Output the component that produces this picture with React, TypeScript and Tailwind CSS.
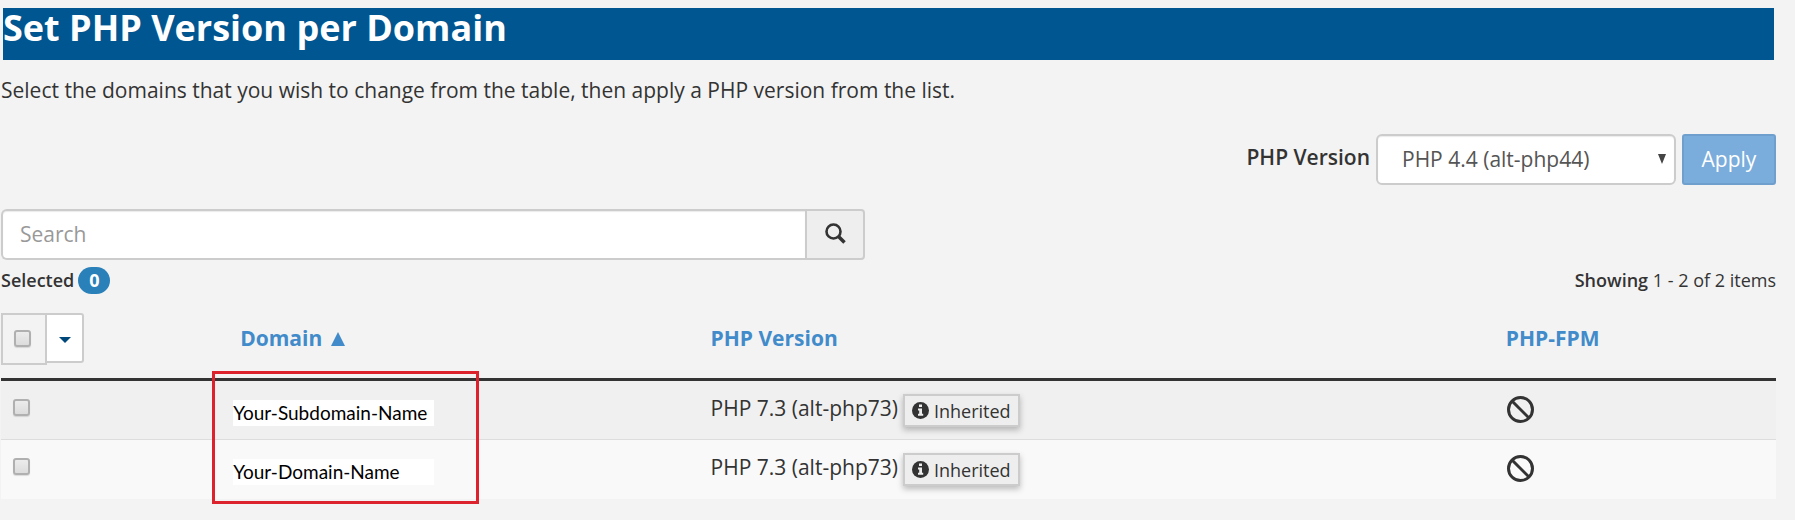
import { useState } from 'react';

const DOMAINS = [
  { name: 'Your-Subdomain-Name', version: 'PHP 7.3 (alt-php73)' },
  { name: 'Your-Domain-Name', version: 'PHP 7.3 (alt-php73)' },
];

export default function App() {
  const [selected, setSelected] = useState<string[]>([]);
  const allSelected = selected.length === DOMAINS.length;

  function toggle(name: string) {
    setSelected((prev) => (prev.includes(name) ? prev.filter((n) => n !== name) : [...prev, name]));
  }

  return (
    <main className="min-h-screen bg-[#f3f3f3] pt-2 pr-[19px] pb-4 pl-px font-['Open_Sans',sans-serif] text-[21px] leading-[30px] font-normal text-[#333]">
      <h1 className="mr-0.5 ml-0.5 h-[52px] bg-[#005691] text-[36px] leading-10 font-bold text-white">
        Set PHP Version per Domain
      </h1>
      <p className="mt-[15px]">
        Select the domains that you wish to change from the table, then apply a PHP version from the list.
      </p>

      <div className="mt-[29px] flex items-center justify-end">
        <label htmlFor="php-version" className="mr-1.5 pb-1.5 font-semibold">
          PHP Version
        </label>
        <div className="relative">
          <select
            id="php-version"
            className="h-[51px] w-[300px] appearance-none rounded-md border-2 border-[#ccc] bg-white pb-0.5 pl-6 text-[#555] shadow-[inset_0_1px_1px_rgba(0,0,0,0.08)]"
          >
            <option>PHP 4.4 (alt-php44)</option>
          </select>
          <svg viewBox="0 0 10 10" className="pointer-events-none absolute top-5 right-[9px] size-[10px] fill-[#444]">
            <path d="M1 0h8L5 10z" />
          </svg>
        </div>
        <button
          type="button"
          className="ml-1.5 h-[51px] w-[94px] rounded-[3px] border-2 border-[#6f9fcd] bg-[#7aaddc] pb-0.5 font-normal text-white"
        >
          Apply
        </button>
      </div>

      <div className="mt-6 flex h-[51px] w-[864px] max-w-full">
        <input
          type="search"
          aria-label="Search"
          placeholder="Search"
          className="min-w-0 flex-1 rounded-l-md border-2 border-r-0 border-[#ccc] bg-white px-[17px] pb-0.5 shadow-[inset_0_1px_1px_rgba(0,0,0,0.08)] placeholder:text-[#999]"
        />
        <button
          type="button"
          aria-label="Run search"
          className="flex w-[60px] items-center justify-center rounded-r-[4px] border-2 border-[#ccc] bg-[#eee] pb-0.5"
        >
          <svg viewBox="0 0 21 21" className="size-[21px] fill-none stroke-[#333]">
            <circle cx="8.5" cy="8.5" r="7" strokeWidth="2.6" />
            <path d="M13.5 13.5l6 6" strokeWidth="3.6" />
          </svg>
        </button>
      </div>

      <div className="mt-[7px] flex h-[27px] items-center justify-between text-[18px]">
        <div className="flex items-center gap-1">
          <span className="pb-0.5 font-semibold">Selected</span>
          <span className="h-[27px] w-8 rounded-full bg-[#2a80b9] text-center leading-[26px] font-bold text-white">
            {selected.length}
          </span>
        </div>
        <div className="pb-0.5">
          <span className="font-semibold">Showing</span> 1 - 2 of 2 items
        </div>
      </div>

      <div className="relative mt-[19px]">
        <table className="w-full table-fixed border-separate border-spacing-0 text-left">
          <colgroup>
            <col className="w-[12.8%]" />
            <col className="w-[26.5%]" />
            <col className="w-[44.8%]" />
            <col />
          </colgroup>
          <thead>
            <tr className="h-[68px] align-top text-[#428bca] [&>th]:border-b-3 [&>th]:border-[#333]">
              <th className="p-0">
                <div className="flex items-start">
                  <label className="flex h-[52px] w-[46px] items-center border-2 border-[#ccc] bg-[#f3f3f3] pb-0.5 pl-[11px]">
                    <Checkbox
                      label="Select all domains"
                      checked={allSelected}
                      onChange={() => setSelected(allSelected ? [] : DOMAINS.map((d) => d.name))}
                    />
                  </label>
                  <button
                    type="button"
                    aria-label="Selection options"
                    className="-ml-0.5 flex h-[50px] w-[39px] items-center justify-center rounded-r-[3px] border-2 border-[#ccc] bg-white"
                  >
                    <svg viewBox="0 0 12 6" className="mt-1 h-1.5 w-3 fill-[#00477a]">
                      <path d="M0 0h12L6 6z" />
                    </svg>
                  </button>
                </div>
              </th>
              <th className="px-3 pt-2.5 font-bold">
                <button type="button" className="flex items-center gap-[9px]">
                  Domain
                  <svg viewBox="0 0 14 14" className="mt-0.5 size-[14px] fill-[#428bca]">
                    <path d="M7 0l7 14H0z" />
                  </svg>
                </button>
              </th>
              <th className="px-3 pt-2.5 font-bold">
                <button type="button">PHP Version</button>
              </th>
              <th className="px-3 pt-2.5 font-bold">
                <button type="button">PHP-FPM</button>
              </th>
            </tr>
          </thead>
          <tbody>
            {DOMAINS.map((d) => (
              <tr
                key={d.name}
                className="h-[59px] bg-[#f0f0f0] align-top last:bg-[#f9f9f9] [&>td]:border-b [&>td]:border-[#ddd] last:[&>td]:border-b-0"
              >
                <td className="pt-[18px] pl-3">
                  <Checkbox
                    label={`Select ${d.name}`}
                    checked={selected.includes(d.name)}
                    onChange={() => toggle(d.name)}
                  />
                </td>
                <td className="pt-[19px] pl-[5px]">
                  <span className="block h-[26px] w-[201px] bg-white font-['Lato',sans-serif] text-[19px] leading-[26px] font-normal whitespace-nowrap text-black">
                    {d.name}
                  </span>
                </td>
                <td className="px-3 pt-3">
                  <div className="flex items-start gap-[5px]">
                    {d.version}
                    <Inherited />
                  </div>
                </td>
                <td className="px-[13px] pt-[15px]">
                  <svg viewBox="0 0 27 27" role="img" aria-label="Disabled" className="size-[27px] fill-none stroke-[#333] stroke-3">
                    <circle cx="13.5" cy="13.5" r="12" />
                    <path d="M5 5l17 17" />
                  </svg>
                </td>
              </tr>
            ))}
          </tbody>
        </table>
        {/* callout around the domain names */}
        <div className="pointer-events-none absolute top-[58px] -bottom-[5px] left-[11.9%] w-[267px] border-3 border-[#dc222c]" />
      </div>
    </main>
  );
}

function Checkbox({ label, checked, onChange }: { label: string; checked: boolean; onChange: () => void }) {
  return (
    <input
      type="checkbox"
      aria-label={label}
      checked={checked}
      onChange={onChange}
      className="block size-[17px] appearance-none rounded-[3px] border-2 border-[#b0b0b0] bg-linear-to-b from-[#ececec] to-[#dcdcdc] shadow-[0_1px_1px_rgba(0,0,0,0.12)] checked:bg-[#428bca]"
    />
  );
}

function Inherited() {
  return (
    <span className="mt-px flex h-[33px] items-center gap-[5px] border-2 border-[#ccc] bg-[#eee] px-[7px] text-[18px] leading-7 shadow-[0_3px_6px_rgba(0,0,0,0.25)]">
      <svg viewBox="0 0 17 17" className="size-[17px]">
        <circle cx="8.5" cy="8.5" r="8.5" fill="#333" />
        <path d="M7 2.5h3v2.6H7zM6 6.5h4v5.2h1.2v2H6v-2h1.2V8.4H6z" fill="#eee" />
      </svg>
      Inherited
    </span>
  );
}
